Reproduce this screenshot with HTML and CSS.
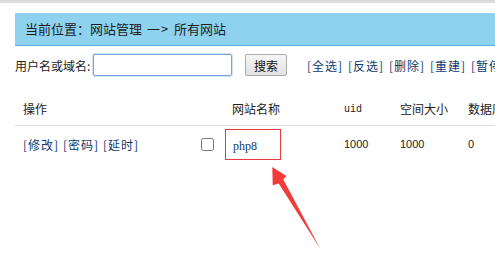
FILE: index.html
```html
<!DOCTYPE html>
<html lang="zh-CN">
<head>
  <meta charset="UTF-8">
  <title>所有网站</title>
  <link rel="stylesheet" href="styles.css">
</head>
<body>
  <div class="topbar"></div>

  <div class="main">
    <!-- 当前位置 -->
    <div class="crumb">当前位置：网站管理 <span class="sep">一&gt;</span> 所有网站</div>

    <!-- 搜索 + 批量操作 -->
    <div class="search">
      <label for="kw">用户名或域名:</label>
      <input type="text" id="kw" class="kw">
      <button class="btn">搜索</button>
      <div class="bulk">
        <a href="#">[全选]</a>
        <a href="#">[反选]</a>
        <a href="#">[删除]</a>
        <a href="#">[重建]</a>
        <a href="#">[暂停]</a>
      </div>
    </div>

    <!-- 网站列表 -->
    <div class="grid head">
      <div class="c-ops">操作</div>
      <div></div>
      <div class="c-name">网站名称</div>
      <div class="c-uid">uid</div>
      <div>空间大小</div>
      <div>数据库</div>
    </div>
    <div class="grid row">
      <div class="c-ops ops">
        <a href="#">[修改]</a>
        <a href="#">[密码]</a>
        <a href="#">[延时]</a>
      </div>
      <div><input type="checkbox" class="chk"></div>
      <div class="c-name"><span class="mark"><a href="#" class="site">php8</a></span></div>
      <div class="num">1000</div>
      <div class="num">1000</div>
      <div class="num">0</div>
    </div>
  </div>

  <!-- 标注箭头 -->
  <svg class="arrow" width="495" height="266" viewBox="0 0 495 266">
    <polygon points="272.3,167 286.5,176 283.3,179.5 320.7,249.5 278.7,183.5 272.7,185.3" fill="#f23c3c"/>
  </svg>
</body>
</html>
```

FILE: styles.css
```css
html, body {
  margin: 0;
  padding: 0;
}

body {
  font-family: "Noto Sans CJK SC", sans-serif;
  font-size: 12px;
  color: #222;
  background: #fff;
  overflow: hidden;
}

a {
  color: #0e3a70;
  text-decoration: none;
}

.topbar {
  height: 3px;
  background: #dcdcdc;
}

.main {
  padding: 10px 0 0 15px;
  white-space: nowrap;
}

/* ====== 当前位置 ====== */
.crumb {
  height: 32px;
  line-height: 32px;
  background: #8ed2ef;
  border-bottom: 1px solid #55b0dc;
  padding-left: 10px;
  font-size: 13px;
  color: #1e1e1e;
}
.sep {
  letter-spacing: 1px;
  margin: 0 2px;
}

/* ====== 搜索 ====== */
.search {
  display: flex;
  align-items: center;
  height: 22px;
  margin-top: 8px;
}
.search > * {
  flex: none;
}
.search label {
  width: 78px;
}
.kw {
  box-sizing: border-box;
  width: 139px;
  height: 22px;
  margin: 0;
  padding: 0 4px;
  border: 1px solid #7aa3d8;
  border-radius: 2px;
  box-shadow: 0 0 0 1px #d3e2f5;
  outline: none;
}
.btn {
  box-sizing: border-box;
  width: 42px;
  height: 22px;
  margin: 0 0 0 13px;
  padding: 0;
  font-family: inherit;
  font-size: 12px;
  color: #111;
  background: linear-gradient(#f6f6f6, #e2e2e2);
  border: 1px solid #a9a9a9;
  border-radius: 2px;
}
.bulk {
  display: flex;
  margin-left: 20px;
}
.bulk a {
  width: 41px;
  flex: none;
  letter-spacing: 1px;
}

/* ====== 列表 ====== */
.grid {
  display: grid;
  grid-template-columns: 186px 24px 119px 56px 68px 1fr;
  align-items: center;
}
.head {
  height: 34px;
  margin-top: 15px;
  border-bottom: 1px solid #dedede;
}
.row {
  height: 36px;
}
.c-ops {
  padding-left: 8px;
}
.c-name {
  padding-left: 7px;
}
.c-uid {
  font-family: "Liberation Mono", monospace;
  font-size: 10px;
  padding-top: 3px;
}
.ops {
  display: flex;
}
.ops a {
  width: 40px;
  flex: none;
  letter-spacing: 1px;
}
.chk {
  width: 13px;
  height: 13px;
  margin: 0;
  display: block;
}
.mark {
  display: inline-block;
  box-sizing: border-box;
  margin-left: -7px;
  width: 56px;
  height: 31px;
  line-height: 29px;
  padding-left: 7px;
  border: 1px solid #e8393d;
}
.site {
  font-family: "Liberation Serif", serif;
  font-size: 12px;
}
.num {
  font-family: "Liberation Sans", sans-serif;
  font-size: 11px;
}

/* ====== 标注 ====== */
.arrow {
  position: absolute;
  left: 0;
  top: 0;
  pointer-events: none;
}
```
